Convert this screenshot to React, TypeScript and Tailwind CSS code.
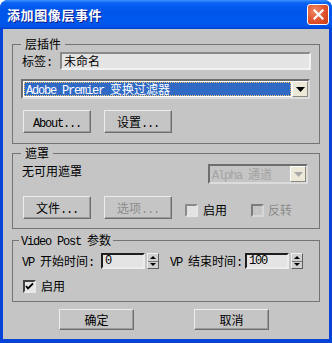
import React from "react";

function Lat({ children }: { children: React.ReactNode }) {
    return <span className="tracking-[-1.2px] leading-none font-[family-name:'Liberation_Mono',monospace]">{children}</span>;
}

function Btn({ children, w = "w-[68px]", h = "h-[23px]", disabled = false }: { children: React.ReactNode; w?: string; h?: string; disabled?: boolean }) {
    return (
        <div
            className={`${w} ${h} flex items-center justify-center border border-t-[#ececec] border-l-[#ececec] border-r-[#6e6e6e] border-b-[#6e6e6e] shadow-[inset_-1px_-1px_0_#9c9c9c] ${disabled ? "text-[#8c8c8c]" : "text-black"}`}
        >
            <span className="h-[14px] leading-[14px]">{children}</span>
        </div>
    );
}

function Check({ checked = false, disabled = false }: { checked?: boolean; disabled?: boolean }) {
    return (
        <div
            className={`w-[13px] h-[13px] flex items-center justify-center border-2 ${
                checked
                    ? "border-t-[#404040] border-l-[#404040] border-r-[#e8e8e8] border-b-[#e8e8e8] bg-[#e6e6e6]"
                    : disabled
                    ? "border-t-[#7c7c7c] border-l-[#7c7c7c] border-r-[#d6d6d6] border-b-[#d6d6d6] bg-[#c5c5c5]"
                    : "border-t-[#8a8a8a] border-l-[#8a8a8a] border-r-[#e6e6e6] border-b-[#e6e6e6] bg-[#e2e2e2]"
            }`}
        >
            {checked && (
                <svg width="9" height="9" viewBox="0 0 9 9">
                    <path d="M1 4 L3 6.5 L8 1.5" stroke="#000" strokeWidth="1.8" fill="none" />
                </svg>
            )}
        </div>
    );
}

function Arrow({ color = "#000" }: { color?: string }) {
    return (
        <svg width="9" height="5" viewBox="0 0 9 5">
            <path d="M0 0 H9 L4.5 5 Z" fill={color} />
        </svg>
    );
}

function Spin() {
    return (
        <div className="w-[12px] h-[16px] flex flex-col border border-t-[#f0f0f0] border-l-[#f0f0f0] border-r-[#5e5e5e] border-b-[#5e5e5e] bg-[#d0d0d0]">
            <div className="flex-1 flex items-center justify-center border-b border-b-[#7a7a7a]">
                <svg width="6" height="3" viewBox="0 0 6 3"><path d="M3 0 L6 3 H0 Z" fill="#000" /></svg>
            </div>
            <div className="flex-1 flex items-center justify-center">
                <svg width="6" height="3" viewBox="0 0 6 3"><path d="M0 0 H6 L3 3 Z" fill="#000" /></svg>
            </div>
        </div>
    );
}

function NumEdit({ value }: { value: string }) {
    return (
        <div className="w-[44px] h-[16px] flex items-center pl-[2px] border-2 border-t-[#1e1e1e] border-l-[#1e1e1e] border-r-[#ececec] border-b-[#ececec] bg-[#e4e4e4] leading-[12px]">
            <Lat>{value}</Lat>
        </div>
    );
}

export default function App() {
    return (
        <div className="w-[332px] h-[343px] bg-white text-[12px] text-black font-[family-name:'Noto_Sans_CJK_SC',sans-serif]">
            <div className="w-full h-full flex flex-col rounded-t-[8px] overflow-hidden bg-[#0843d8]">
                {/* title bar */}
                <div className="h-[29px] shrink-0 flex items-center pl-[7px] pr-[3px] bg-[linear-gradient(180deg,#3d93ff_0%,#0a62f4_10%,#0055ea_35%,#0058ee_75%,#0052e6_92%,#0040cf_100%)]">
                    <span className="text-white font-bold text-[13px] tracking-[0.6px] [text-shadow:1px_1px_0_#0a1a8c]">
                        添加图像层事件
                    </span>
                    <div className="ml-auto w-[22px] h-[21px] rounded-[3px] border border-white flex items-center justify-center bg-[radial-gradient(circle_at_35%_30%,#f08a63_0%,#e0532d_55%,#c63a14_100%)]">
                        <svg width="11" height="11" viewBox="0 0 11 11">
                            <path d="M1.5 1.5 L9.5 9.5 M9.5 1.5 L1.5 9.5" stroke="#fff" strokeWidth="2.2" strokeLinecap="square" />
                        </svg>
                    </div>
                </div>

                {/* client area */}
                <div className="flex-1 mx-[3px] mb-[4px] bg-[#c5c5c5] flex flex-col px-[9px] pt-[8px]">
                    {/* 层插件 */}
                    <fieldset className="border border-[#747474] pb-[10px]">
                        <legend className="ml-[8px] px-[4px] h-[14px] leading-[14px]">层插件</legend>
                        <div className="flex items-center mt-[1px] pl-[9px] pr-[8px]">
                            <span className="w-[38px] h-[14px] leading-[14px]">
                                标签<Lat>:</Lat>
                            </span>
                            <div className="flex-1 h-[18px] flex items-center pl-[2px] border-2 border-t-[#8a8a8a] border-l-[#8a8a8a] border-r-[#f2f2f2] border-b-[#f2f2f2] bg-[#e4e4e4] leading-[14px]">
                                未命名
                            </div>
                        </div>
                        <div className="mt-[9px] ml-[8px] mr-[9px] h-[20px] flex border-2 border-t-[#6e6e6e] border-l-[#6e6e6e] border-r-[#dcdcdc] border-b-[#dcdcdc] bg-white">
                            <div className="flex-1 m-px flex items-center pl-[1px] bg-[#316ac5] text-white border border-dotted border-[#f3c56a]">
                                <span className="h-[14px] leading-[14px]">
                                    <Lat>Adobe Premier </Lat>变换过滤器
                                </span>
                            </div>
                            <div className="w-[16px] flex items-center justify-center bg-[#ece9d8] border border-t-white border-l-white border-r-[#8c8a7e] border-b-[#8c8a7e]">
                                <Arrow />
                            </div>
                        </div>
                        <div className="mt-[11px] pl-[10px] flex gap-[13px]">
                            <Btn>
                                <Lat>About...</Lat>
                            </Btn>
                            <Btn>
                                设置<Lat>...</Lat>
                            </Btn>
                        </div>
                    </fieldset>

                    {/* 遮罩 */}
                    <fieldset className="mt-[2px] border border-[#747474] pb-[9px]">
                        <legend className="ml-[8px] px-[4px] h-[14px] leading-[14px]">遮罩</legend>
                        <div className="mt-[4px] flex items-start pl-[9px] pr-[11px]">
                            <span className="h-[14px] leading-[14px]">无可用遮罩</span>
                            <div className="ml-auto w-[100px] h-[20px] flex border-2 border-t-[#6e6e6e] border-l-[#6e6e6e] border-r-[#dcdcdc] border-b-[#dcdcdc] bg-[#c5c5c5]">
                                <div className="flex-1 flex items-center pl-[2px] text-[#a3a3a3]">
                                    <span className="h-[14px] leading-[14px]">
                                        <Lat>Alpha </Lat>通道
                                    </span>
                                </div>
                                <div className="w-[16px] flex items-center justify-center bg-[#ece9d8] border border-t-white border-l-white border-r-[#8c8a7e] border-b-[#8c8a7e]">
                                    <Arrow color="#a8a8a8" />
                                </div>
                            </div>
                        </div>
                        <div className="mt-[12px] pl-[10px] flex items-center">
                            <Btn>
                                文件<Lat>...</Lat>
                            </Btn>
                            <div className="ml-[13px]">
                                <Btn disabled>
                                    选项<Lat>...</Lat>
                                </Btn>
                            </div>
                            <div className="ml-[13px] mt-[5px] flex items-center">
                                <Check />
                                <span className="ml-[5px] h-[14px] leading-[14px]">启用</span>
                            </div>
                            <div className="ml-[24px] mt-[5px] flex items-center">
                                <Check disabled />
                                <span className="ml-[4px] h-[14px] leading-[14px] text-[#8c8c8c]">反转</span>
                            </div>
                        </div>
                    </fieldset>

                    {/* Video Post 参数 */}
                    <fieldset className="mt-[4px] border border-[#747474] pb-[8px]">
                        <legend className="ml-[6px] px-[2px] h-[14px] leading-[14px]">
                            <Lat>Video Post </Lat>参数
                        </legend>
                        <div className="mt-[6px] pl-[9px] flex items-center">
                            <span className="w-[79px] h-[14px] leading-[14px]">
                                <Lat>VP </Lat>开始时间<Lat>:</Lat>
                            </span>
                            <NumEdit value="0" />
                            <div className="ml-[2px]">
                                <Spin />
                            </div>
                            <span className="ml-[11px] w-[75px] h-[14px] leading-[14px]">
                                <Lat>VP </Lat>结束时间<Lat>:</Lat>
                            </span>
                            <NumEdit value="100" />
                            <div className="ml-[2px]">
                                <Spin />
                            </div>
                        </div>
                        <div className="mt-[10px] pl-[10px] flex items-center">
                            <Check checked />
                            <span className="ml-[5px] h-[14px] leading-[14px]">启用</span>
                        </div>
                    </fieldset>

                    <div className="mt-[7px] flex">
                        <div className="ml-[47px]">
                            <Btn w="w-[75px]" h="h-[21px]">确定</Btn>
                        </div>
                        <div className="ml-[60px]">
                            <Btn w="w-[75px]" h="h-[21px]">取消</Btn>
                        </div>
                    </div>
                </div>
            </div>
        </div>
    );
}
